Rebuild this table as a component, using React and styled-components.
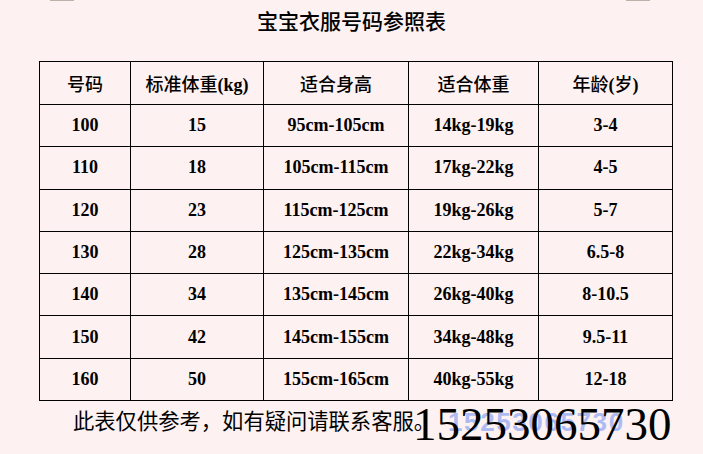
import React from "react";
import styled, { createGlobalStyle } from "styled-components";

const Global = createGlobalStyle`
  html, body { margin: 0; padding: 0; background: #fdf1f1; }
  body { font-family: "Noto Sans CJK SC", sans-serif; color: #000; }
`;

const Page = styled.div`
  width: 703px;
  height: 454px;
  background: #fdf1f1;
  overflow: hidden;
`;

const TopStrip = styled.div`
  display: flex;
  justify-content: space-between;
  height: 1px;
  padding: 0 53px 0 50px;
`;

const Tick = styled.div`
  width: 24px;
  height: 1px;
  background: #bfb1a9;
`;

const Title = styled.h1`
  margin: 0;
  padding-top: 6px;
  font-family: "Noto Sans CJK SC", sans-serif;
  font-weight: 500;
  font-size: 21px;
  line-height: 26px;
  text-align: center;
`;

const Table = styled.table`
  margin: 28px 0 0 39px;
  width: 633px;
  border-collapse: collapse;
  table-layout: fixed;
`;

const HeadCell = styled.th`
  border: 1px solid #000;
  height: 42px;
  padding: 0;
  font-family: "Noto Sans CJK SC", sans-serif;
  font-weight: 500;
  font-size: 18px;
  text-align: center;
  vertical-align: middle;
`;

const Latin = styled.span`
  font-family: "Liberation Serif", serif;
  font-weight: bold;
`;

const Row = styled.tr`
  height: 42.3px;
`;

const Cell = styled.td`
  border: 1px solid #000;
  padding: 0;
  font-family: "Liberation Serif", serif;
  font-weight: bold;
  font-size: 18px;
  text-align: center;
  vertical-align: middle;
`;

const Footer = styled.div`
  display: flex;
  align-items: flex-start;
  padding-left: 73px;
`;

const Note = styled.span`
  margin-top: 8px;
  font-family: "Noto Sans CJK SC", sans-serif;
  font-size: 21.3px;
  line-height: 21px;
  white-space: nowrap;
`;

const Phone = styled.span`
  position: relative;
  margin-left: -22px;
  font-family: "Liberation Serif", serif;
  font-size: 47px;
  line-height: 47px;
  white-space: nowrap;
`;

const PhoneText = styled.span`
  position: relative;
  z-index: 1;
`;

const Watermark = styled.span`
  position: absolute;
  left: 35px;
  top: 8px;
  z-index: 0;
  font-family: "Liberation Sans", sans-serif;
  font-weight: bold;
  font-size: 26px;
  line-height: 26px;
  letter-spacing: 1.6px;
  color: rgba(105, 140, 245, 0.55);
`;

const cols = [91, 133, 145, 130, 134];

const rows = [
  ["100", "15", "95cm-105cm", "14kg-19kg", "3-4"],
  ["110", "18", "105cm-115cm", "17kg-22kg", "4-5"],
  ["120", "23", "115cm-125cm", "19kg-26kg", "5-7"],
  ["130", "28", "125cm-135cm", "22kg-34kg", "6.5-8"],
  ["140", "34", "135cm-145cm", "26kg-40kg", "8-10.5"],
  ["150", "42", "145cm-155cm", "34kg-48kg", "9.5-11"],
  ["160", "50", "155cm-165cm", "40kg-55kg", "12-18"],
];

export default function App() {
  return (
    <Page>
      <Global />
      <TopStrip>
        <Tick />
        <Tick />
      </TopStrip>
      <Title>宝宝衣服号码参照表</Title>
      <Table>
        <colgroup>
          {cols.map((w, i) => (
            <col key={i} style={{ width: w }} />
          ))}
        </colgroup>
        <thead>
          <tr>
            <HeadCell>号码</HeadCell>
            <HeadCell>
              标准体重<Latin>(kg)</Latin>
            </HeadCell>
            <HeadCell>适合身高</HeadCell>
            <HeadCell>适合体重</HeadCell>
            <HeadCell>
              年龄<Latin>(</Latin>岁<Latin>)</Latin>
            </HeadCell>
          </tr>
        </thead>
        <tbody>
          {rows.map((r) => (
            <Row key={r[0]}>
              {r.map((c, i) => (
                <Cell key={i}>{c}</Cell>
              ))}
            </Row>
          ))}
        </tbody>
      </Table>
      <Footer>
        <Note>此表仅供参考，如有疑问请联系客服。</Note>
        <Phone>
          <Watermark>15253065730</Watermark>
          <PhoneText>15253065730</PhoneText>
        </Phone>
      </Footer>
    </Page>
  );
}
